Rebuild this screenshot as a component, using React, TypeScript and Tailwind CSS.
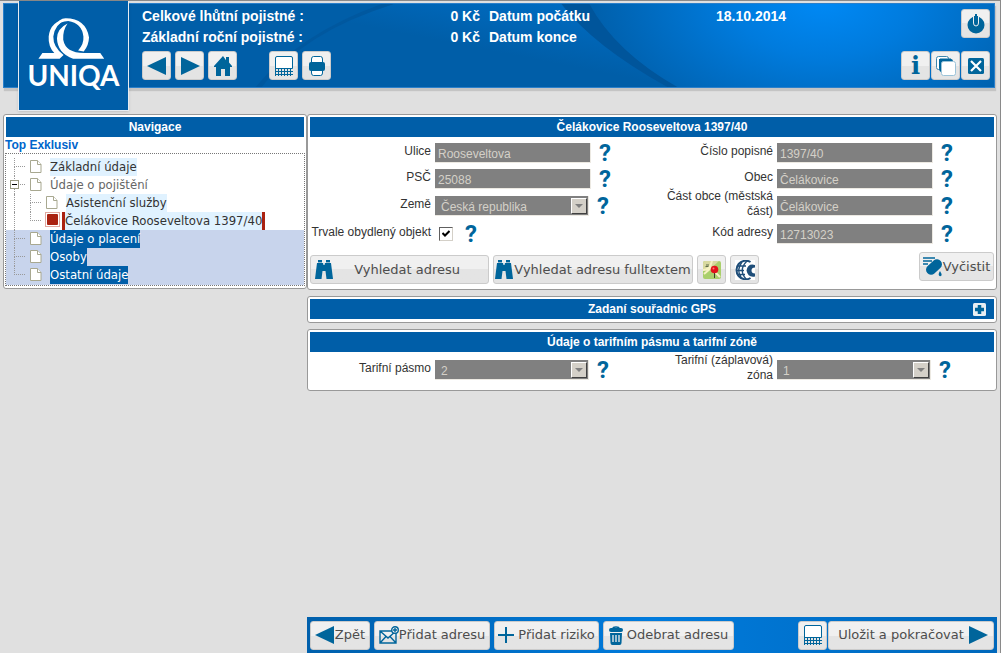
import type { ReactNode } from "react";
import clsx from "clsx";

const arial = "font-['Liberation_Sans',Arial,sans-serif]";
const verdana = "font-['DejaVu_Sans',Verdana,sans-serif]";
const tahoma = "font-['DejaVu_Sans_Condensed','DejaVu_Sans',Tahoma,sans-serif]";

/* ---------- Icons ---------- */

const ArrowLeft = () => (
  <svg width="20" height="18" viewBox="0 0 20 18" fill="#00659b">
    <path d="M0 9 19 0v18z" />
  </svg>
);

const ArrowRight = () => (
  <svg width="20" height="18" viewBox="0 0 20 18" fill="#00659b">
    <path d="M20 9 1 0v18z" />
  </svg>
);

const HomeIcon = () => (
  <svg width="18" height="20" viewBox="0 0 18 20" fill="#00659b">
    <path d="M9 0 0 10v1h2v9h5v-7h4v7h5v-9h2v-1l-3-3.500V1h-3v3.300z" />
  </svg>
);

const CalcIcon = () => (
  <svg width="18" height="20" viewBox="0 0 18 20" fill="none" stroke="#00659b">
    <path d="M.5 12.500V2Q.5.500 2 .500h14Q17.500.500 17.500 2v10.500z" fill="#fff" />
    <path d="M0 15.500h18M0 18.500h18M.5 12v8M3.500 12v8M6.500 12v8M9.500 12v8M12.500 12v8M15.500 12v8" />
  </svg>
);

const PrintIcon = () => (
  <svg width="16" height="20" viewBox="0 0 16 20">
    <path d="M2.500 8V3q0-2.500 2-2.500h7q2 0 2 2.500v5M2.500 12v5q0 2.500 2 2.500h7q2 0 2-2.500v-5" fill="#fff" stroke="#00659b" />
    <rect y="6" width="16" height="9" rx="2" fill="#00659b" />
  </svg>
);

const PowerIcon = () => (
  <svg width="18" height="20" viewBox="0 0 18 20">
    <circle cx="9" cy="11" r="8.500" fill="#00659b" />
    <path d="M6.500 2v7q0 3 2.500 3t2.500-3V2" fill="#00659b" stroke="#eee" />
    <path d="M9 0v9.500" stroke="#00659b" strokeWidth="2" />
  </svg>
);

const WindowsIcon = () => (
  <svg width="20" height="20" viewBox="0 0 20 20" fill="#fff">
    <rect x=".5" y=".5" width="12" height="13" rx="2" stroke="#3d86ad" />
    <path d="M3 3h12q2 0 2 3H7v10H5q-2-1-2-4z" fill="#00659b" />
    <path d="M4 3.500h11" stroke="#00659b" strokeWidth="2" />
    <rect x="5.500" y="5.500" width="14" height="14" rx="2" stroke="#9cc3d8" />
  </svg>
);

const CloseIcon = () => (
  <svg width="18" height="18" viewBox="0 0 18 18">
    <rect x="1" y="1" width="16" height="16" rx="1.500" fill="#00659b" />
    <path d="m4 4 10 10M14 4 4 14" stroke="#fff" strokeWidth="2.200" />
  </svg>
);

const BinocularsIcon = () => (
  <svg width="18" height="20" viewBox="0 0 18 20" fill="#00659b">
    <path d="M3 0h4v3h1l.500 2h1L10 3h1V0h4v3h1l2 16h-6.500L10.500 11h-3l-1 8H0L2 3h1z" />
    <path d="M3 2.500h4M11 2.500h4" stroke="#eee" strokeWidth=".6" />
  </svg>
);

const MapIcon = () => (
  <svg width="18" height="18" viewBox="0 0 18 18">
    <rect width="18" height="18" rx="2" fill="#a9cf6b" />
    <path d="M0 2q0-2 2-2h14L6 9 0 10z" fill="#d8d9a0" />
    <path d="M0 9q7 0 9-9M1 13l7-6 9 9" stroke="#f6f2c2" strokeWidth="2" fill="none" />
    <path d="M2.500 5.500h3M3 4h3" stroke="#5f6d4a" />
    <path d="M11.500 10v7" stroke="#3c3c2c" />
    <circle cx="11.500" cy="8.500" r="3.800" fill="#e3121a" />
    <circle cx="10.500" cy="7.500" r="1" fill="#ff7a72" />
  </svg>
);

const GlobeIcon = () => (
  <svg width="20" height="20" viewBox="0 0 20 20">
    <rect width="20" height="20" fill="#fff" />
    <g fill="none" stroke="#1f4e79" strokeWidth="1.300">
      <path d="M15.500 2A9.300 9.300 0 1 0 15.500 18" strokeWidth="2" />
      <path d="M12 1Q3 10 11 19M7 2Q1 10 6 17M2 6h9M1 10.500h8M2 14.500h8" />
    </g>
    <path d="M20 5q-7-2-8.500 5.500Q13 18 20 16.500v-3q-3.500 0-3.500-3t3.500-3z" fill="#1f4e79" />
    <path d="M20 8a2.500 2.500 0 0 0 0 5z" fill="#fff" />
  </svg>
);

const CleanIcon = () => (
  <svg width="20" height="20" viewBox="0 0 20 20">
    <path d="M0 1h12M0 4h9M0 7h5" stroke="#00659b" strokeWidth="1.300" />
    <rect x="2" y="5" width="18" height="10" rx="5" transform="rotate(-42 11 10)" fill="#00659b" />
    <path d="M17 14q-2 3-1 4.500t2.500 0Q19 17 17 14z" fill="#00659b" />
  </svg>
);

const MailIcon = () => (
  <svg width="20" height="18" viewBox="0 0 20 18" fill="none" stroke="#00659b" strokeWidth="1.400">
    <path d="M1 5h16v12H1zM1 5l8 7 8-7M1 17l6-6.500M17 17l-6-6.500" />
    <circle cx="16" cy="4" r="3.300" fill="#eee" />
    <path d="M14 4h4M16 2v4" />
  </svg>
);

const PlusIcon = () => (
  <svg width="16" height="16" viewBox="0 0 16 16">
    <path d="M0 8h16M8 0v16" stroke="#00659b" strokeWidth="2" />
  </svg>
);

const TrashIcon = () => (
  <svg width="14" height="19" viewBox="0 0 14 19">
    <path d="M4 2.500Q4 1 7 1t3 1.500" stroke="#00659b" strokeWidth="1.500" fill="none" />
    <rect y="2" width="14" height="4" rx="2" fill="#00659b" />
    <path d="M1 7h12l-.500 10q0 2-2 2h-7q-2 0-2-2z" fill="#00659b" />
    <path d="M4 9v7M7 9v7M10 9v7" stroke="#eee" strokeWidth="1.300" />
  </svg>
);

const ExpandIcon = () => (
  <svg width="13" height="13" viewBox="0 0 13 13">
    <rect width="13" height="13" rx="1.500" fill="#e8eef2" />
    <path d="M2 6.500h9M6.500 2v9" stroke="#00659b" strokeWidth="3.500" />
  </svg>
);

const PageIcon = () => (
  <svg width="12" height="13" viewBox="0 0 12 13" fill="#fff" stroke="#a8a890">
    <path d="M.5.500h7l3.500 4v8H.500z" />
    <path d="M7.500.500v4H11" />
  </svg>
);

/* ---------- Shared pieces ---------- */

interface ButtonProps {
  children: ReactNode;
  label?: string;
  className?: string;
}

const Button = ({ children, label, className }: ButtonProps) => (
  <button
    type="button"
    aria-label={label}
    className={clsx(
      "flex items-center justify-center shrink-0 h-[29px] rounded-[3px] border border-[#cbcbcb] bg-linear-to-b from-[#f0f0f0] from-50% to-[#e4e4e4] to-50% text-[13px] leading-4 text-[#4d4d4d] whitespace-nowrap",
      verdana,
      className
    )}
  >
    {children}
  </button>
);

const IconButton = ({ children, label }: ButtonProps) => (
  <Button label={label} className="w-[29px]">
    {children}
  </Button>
);

const Panel = ({ children }: { children: ReactNode }) => (
  <section className="rounded-[3px] border border-[#999] bg-white p-[2px]">{children}</section>
);

const PanelTitle = ({ children }: { children: ReactNode }) => (
  <h2 className="h-5 bg-[#005ea8] text-center text-[12px] leading-5 font-bold text-white">{children}</h2>
);

const Help = () => (
  <button
    type="button"
    className="w-4 text-center font-['Roboto',sans-serif] text-[24px] leading-6 font-bold text-[#00659b]"
  >
    ?
  </button>
);

interface FieldProps {
  id: string;
  label: string;
  value?: string;
  kind?: "text" | "select" | "check";
  compact?: boolean;
}

const Field = ({ id, label, value, kind = "text", compact }: FieldProps) => (
  <div className={clsx("flex items-center", compact ? "h-[26px]" : "h-7")}>
    <label htmlFor={id} className="mr-1 w-[121px] shrink-0 pb-1 text-right text-[12px] leading-[15px] text-[#333]">
      {label}
    </label>
    {kind === "text" && (
      <input
        id={id}
        readOnly
        defaultValue={value}
        className="mr-1.5 h-5 w-[156px] border-r border-b border-[#ece9e2] bg-[#808080] px-[3px] pt-0.5 text-[12px] text-[#d4d0c8]"
      />
    )}
    {kind === "select" && (
      <div className="relative mr-1.5">
        <select
          id={id}
          defaultValue={value}
          className="block h-5 w-[154px] appearance-none border-r border-b border-[#ece9e2] bg-[#808080] px-1.5 pt-0.5 text-[12px] text-[#d4d0c8]"
        >
          <option>{value}</option>
        </select>
        <span className="pointer-events-none absolute top-0.5 right-0.5 flex h-4 w-4 items-center justify-center border border-t-white border-r-[#404040] border-b-[#404040] border-l-white bg-[#d4d0c8]">
          <svg width="8" height="4" viewBox="0 0 8 4" fill="#808080">
            <path d="M0 0h8L4 4z" />
          </svg>
        </span>
      </div>
    )}
    {kind === "check" && (
      <span className="relative mr-2.5 ml-1 flex">
        <input
          id={id}
          type="checkbox"
          defaultChecked
          className="peer h-[14px] w-[14px] appearance-none border border-t-[#606060] border-r-[#d4d0c8] border-b-[#d4d0c8] border-l-[#606060] bg-white"
        />
        <svg
          width="8"
          height="8"
          viewBox="0 0 8 8"
          className="pointer-events-none absolute top-[3px] left-[3px] hidden peer-checked:block"
        >
          <path d="m.5 3 2.500 2.500L7.500 1" fill="none" stroke="#000" strokeWidth="2" />
        </svg>
      </span>
    )}
    <Help />
  </div>
);

/* ---------- Header ---------- */

const Logo = () => (
  <div className="z-10 -mt-[3px] -mb-7 ml-[14px] flex h-[110px] w-[111px] flex-col items-center border border-t-0 border-[#e6ecf2] bg-[#005ea8] pt-[17px] shadow">
    <svg width="67" height="41" viewBox="70 36 200 124" fill="#fff" className="mr-1">
      <path d="M70 159 82 142H118Q99 122 101 92 106 44 158 38 119 54 115 92 114 124 146 148L134 159z" />
      <path d="M152 37Q214 38 223 95 222 120 207 137L190 134Q208 115 206 92 202 52 160 45 136 46 122 60 132 38 152 37z" />
      <path d="M158 53Q127 68 126 98 128 143 175 159H269L257 142H208Q152 142 145 102 143 74 158 53z" />
    </svg>
    <span className="font-['Lato',sans-serif] text-[28px] leading-8 font-bold text-white">UNIQA</span>
  </div>
);

const Header = () => (
  <header className="relative mt-0.5 mr-[5px] ml-[3px] flex h-[85px] items-start border border-[#2b80cb] bg-[#005ea8] text-white shadow-[1px_3px_1px_#c4c4c4]">
    <svg className="absolute inset-0 h-full w-full" viewBox="0 0 991 83" preserveAspectRatio="none">
      <defs>
        <radialGradient id="glow" gradientUnits="userSpaceOnUse" cx="820" cy="-15" r="230" gradientTransform="translate(0 6) scale(1 .6)">
          <stop offset="0" stopColor="#0089f5" />
          <stop offset=".4" stopColor="#007bdd" />
          <stop offset="1" stopColor="#0060ac" />
        </radialGradient>
        <linearGradient id="sweep" x1="0" y1="1" x2="1" y2="0">
          <stop offset=".5" stopColor="#005ea8" />
          <stop offset="1" stopColor="#0070ca" />
        </linearGradient>
      </defs>
      <path d="M250 83Q300 30 390 0H560Q600 50 672 83z" fill="url(#sweep)" />
      <path d="M585 0Q610 45 672 83H991V0z" fill="url(#glow)" />
      <path d="M558 0h28Q612 48 674 83h-10Q590 42 558 0z" fill="#00559b" />
      <path d="M258 83Q300 28 390 0h-12Q295 30 252 83z" fill="#00589f" />
    </svg>
    <Logo />
    <div className="relative flex grow justify-between pt-0.5 pr-1 pl-[13px]">
      <div>
        <dl className="grid grid-cols-[240px_98px_9px_227px_auto] text-[14px] leading-[21px] font-bold">
          <dt>Celkové lhůtní pojistné :</dt>
          <dd className="text-right">0 Kč</dd>
          <dt className="col-start-4">Datum počátku</dt>
          <dd>18.10.2014</dd>
          <dt className="col-start-1">Základní roční pojistné :</dt>
          <dd className="text-right">0 Kč</dd>
          <dt className="col-start-4">Datum konce</dt>
        </dl>
        <div className="mt-[3px] flex gap-1">
          <IconButton label="Zpět"><ArrowLeft /></IconButton>
          <IconButton label="Vpřed"><ArrowRight /></IconButton>
          <IconButton label="Domů"><HomeIcon /></IconButton>
          <div className="w-6" />
          <IconButton label="Kalkulačka"><CalcIcon /></IconButton>
          <IconButton label="Tisk"><PrintIcon /></IconButton>
        </div>
      </div>
      <div className="flex flex-col items-end gap-[13px] pt-[3px]">
        <IconButton label="Odhlásit"><PowerIcon /></IconButton>
        <div className="flex gap-px">
          <IconButton>
            <span className="font-['DejaVu_Serif',serif] text-[24px] leading-6 font-bold text-[#00659b]">i</span>
          </IconButton>
          <IconButton label="Okna"><WindowsIcon /></IconButton>
          <IconButton label="Zavřít"><CloseIcon /></IconButton>
        </div>
      </div>
    </div>
  </header>
);

/* ---------- Navigation tree ---------- */

interface TreeRowProps {
  label: string;
  child?: boolean;
  last?: boolean;
  toggle?: boolean;
  active?: boolean;
  textClass: string;
}

const TreeRow = ({ label, child, last, toggle, active, textClass }: TreeRowProps) => (
  <li className="flex h-[18px] pl-2">
    {child && <span className="w-4 border-l border-dotted border-[#999]" />}
    <span className="relative flex w-4 flex-col">
      <span className="h-[9px] w-[11px] border-b border-l border-dotted border-[#999]" />
      {!last && <span className="h-[9px] border-l border-dotted border-[#999]" />}
      {toggle && (
        <button
          type="button"
          aria-label="Sbalit"
          className="absolute top-1 -left-1 flex h-[9px] w-[9px] items-center justify-center border border-[#999980] bg-white"
        >
          <span className="h-px w-[5px] bg-black" />
        </button>
      )}
    </span>
    <span className={clsx("shrink-0", active ? "w-[17px] -ml-px" : "w-5 pt-0.5")}>
      {active ? (
        <svg width="15" height="15" viewBox="0 0 15 15">
          <rect x=".5" y=".5" width="14" height="14" fill="#fff" stroke="#e0a8a0" />
          <rect x="2" y="2" width="11" height="11" rx="1" fill="#aa2211" />
        </svg>
      ) : (
        <PageIcon />
      )}
    </span>
    <a
      href="#"
      className={clsx("text-[13px] leading-[18px] whitespace-nowrap", tahoma, textClass, active && "border-x-[3px] border-[#aa2211]")}
    >
      {label}
    </a>
  </li>
);

const Navigation = () => (
  <nav className="w-[304px] shrink-0">
    <Panel>
      <PanelTitle>Navigace</PanelTitle>
      <div className="-mx-px">
        <p className="h-4 text-[12px] leading-4 font-bold text-[#0066cc]">Top Exklusiv</p>
        <div className="border border-dotted border-[#777]">
          <ul className="pt-1">
            <TreeRow label="Základní údaje" textClass="bg-[#e0f2ff] text-[#333]" />
            <TreeRow label="Údaje o pojištění" toggle textClass="text-[#666]" />
            <TreeRow label="Asistenční služby" child textClass="bg-[#e0f2ff] text-[#333]" />
            <TreeRow label="Čelákovice Rooseveltova 1397/40" child last active textClass="bg-[#e0f2ff] text-[#333]" />
          </ul>
          <ul className="bg-[#c8d4ec] pb-px">
            <TreeRow label="Údaje o placení" textClass="bg-[#005ea8] text-white" />
            <TreeRow label="Osoby" textClass="bg-[#005ea8] text-white" />
            <TreeRow label="Ostatní údaje" last textClass="bg-[#005ea8] text-white" />
          </ul>
        </div>
      </div>
    </Panel>
  </nav>
);

/* ---------- Page ---------- */

const AddressPanel = () => (
  <Panel>
    <PanelTitle>Čelákovice Rooseveltova 1397/40</PanelTitle>
    <div className="grid grid-cols-2 pt-[3px]">
      <Field id="street" label="Ulice" value="Rooseveltova" compact />
      <Field id="number" label="Číslo popisné" value="1397/40" compact />
      <Field id="zip" label="PSČ" value="25088" compact />
      <Field id="town" label="Obec" value="Čelákovice" compact />
      <Field id="country" label="Země" value="Česká republika" kind="select" />
      <Field id="district" label="Část obce (městská část)" value="Čelákovice" />
      <Field id="occupied" label="Trvale obydlený objekt" kind="check" />
      <Field id="code" label="Kód adresy" value="12713023" />
    </div>
    <div className="flex items-start justify-between pt-1 pb-[3px]">
      <div className="flex gap-1 pt-[3px]">
        <Button className="w-[179px] pr-7 pl-1">
          <BinocularsIcon />
          <span className="grow text-right">Vyhledat adresu</span>
        </Button>
        <Button className="w-[200px] gap-px">
          <BinocularsIcon />
          Vyhledat adresu fulltextem
        </Button>
        <IconButton label="Mapa"><MapIcon /></IconButton>
        <IconButton label="Katastr"><GlobeIcon /></IconButton>
      </div>
      <Button className="w-[75px]">
        <CleanIcon />
        Vyčistit
      </Button>
    </div>
  </Panel>
);

const Footer = () => (
  <footer className="flex h-9 items-center gap-1 bg-linear-to-r from-[#0060ac] via-[#007bdd] to-[#0068bb] px-[3px]">
    <Button className="w-[60px]">
      <ArrowLeft />
      Zpět
    </Button>
    <Button className="w-[116px]">
      <MailIcon />
      Přidat adresu
    </Button>
    <Button className="w-[105px] gap-1">
      <PlusIcon />
      Přidat riziko
    </Button>
    <Button className="w-[131px] gap-1">
      <TrashIcon />
      Odebrat adresu
    </Button>
    <div className="ml-auto flex gap-px">
      <IconButton label="Kalkulačka"><CalcIcon /></IconButton>
      <Button className="w-[166px] gap-1 pl-1">
        Uložit a pokračovat
        <ArrowRight />
      </Button>
    </div>
  </footer>
);

const App = () => (
  <div className={clsx("flex min-h-screen flex-col border-t border-r border-[#8a8a8a] bg-[#e0e0e0]", arial)}>
    <Header />
    <main className="mt-[26px] mr-[3px] mb-4 ml-[3px] flex items-start">
      <Navigation />
      <div className="flex min-w-0 grow flex-col gap-1.5">
        <AddressPanel />
        <Panel>
          <div className="relative pb-px">
            <PanelTitle>Zadaní souřadnic GPS</PanelTitle>
            <button type="button" aria-label="Rozbalit" className="absolute top-1 right-2">
              <ExpandIcon />
            </button>
          </div>
        </Panel>
        <Panel>
          <PanelTitle>Údaje o tarifním pásmu a tarifní zóně</PanelTitle>
          <div className="grid grid-cols-2 pt-1 pb-1">
            <Field id="band" label="Tarifní pásmo" value="2" kind="select" />
            <Field id="zone" label="Tarifní (záplavová) zóna" value="1" kind="select" />
          </div>
        </Panel>
      </div>
    </main>
    <div className="mt-auto mr-[3px] ml-[307px]">
      <Footer />
    </div>
  </div>
);

export default App;
